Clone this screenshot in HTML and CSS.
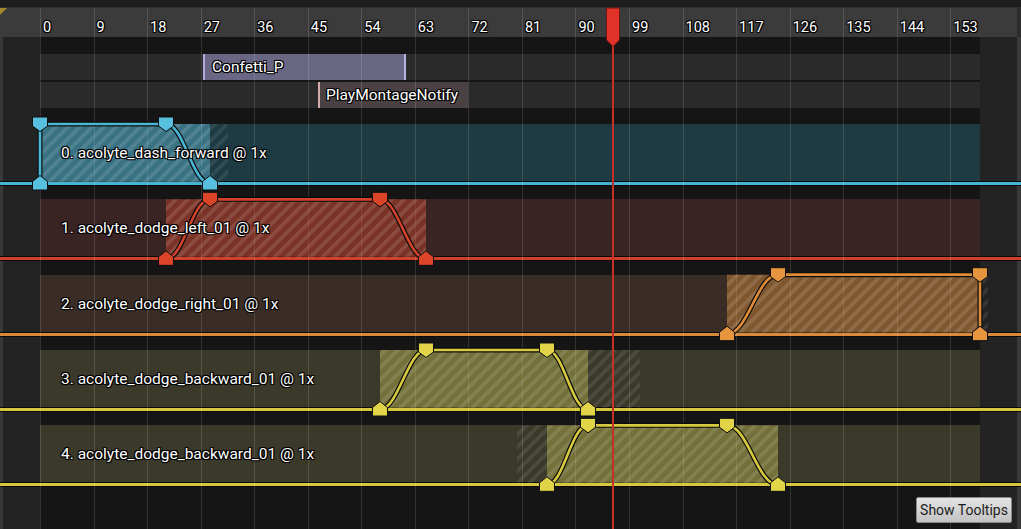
FILE: index.html
```html
<!DOCTYPE html>
<html>
<head>
<meta charset="utf-8">
<title>Montage Timeline</title>
<link rel="stylesheet" href="styles.css">
</head>
<body>
<div class="panel">
  <div class="topbar"></div>
  <div class="ruler">
    <div class="tick"><span>0</span></div>
    <div class="tick"><span>9</span></div>
    <div class="tick"><span>18</span></div>
    <div class="tick"><span>27</span></div>
    <div class="tick"><span>36</span></div>
    <div class="tick"><span>45</span></div>
    <div class="tick"><span>54</span></div>
    <div class="tick"><span>63</span></div>
    <div class="tick"><span>72</span></div>
    <div class="tick"><span>81</span></div>
    <div class="tick"><span>90</span></div>
    <div class="tick"><span>99</span></div>
    <div class="tick"><span>108</span></div>
    <div class="tick"><span>117</span></div>
    <div class="tick"><span>126</span></div>
    <div class="tick"><span>135</span></div>
    <div class="tick"><span>144</span></div>
    <div class="tick"><span>153</span></div>
  </div>

  <div class="gap-top"></div>
  <div class="notify-row">
    <div class="notify-item confetti">Confetti_P</div>
  </div>
  <div class="notify-sep"></div>
  <div class="notify-row">
    <div class="notify-item montage">PlayMontageNotify</div>
  </div>
  <div class="gap-mid"></div>

  <div class="track blue">
    <div class="band"><span class="track-label">0. acolyte_dash_forward @ 1x</span></div>
    <div class="track-line"></div>
    <div class="track-gap"></div>
  </div>
  <div class="track red">
    <div class="band"><span class="track-label">1. acolyte_dodge_left_01 @ 1x</span></div>
    <div class="track-line"></div>
    <div class="track-gap"></div>
  </div>
  <div class="track orange">
    <div class="band"><span class="track-label">2. acolyte_dodge_right_01 @ 1x</span></div>
    <div class="track-line"></div>
    <div class="track-gap"></div>
  </div>
  <div class="track yellow">
    <div class="band"><span class="track-label">3. acolyte_dodge_backward_01 @ 1x</span></div>
    <div class="track-line"></div>
    <div class="track-gap"></div>
  </div>
  <div class="track yellow">
    <div class="band"><span class="track-label">4. acolyte_dodge_backward_01 @ 1x</span></div>
    <div class="track-line"></div>
  </div>
  <div class="rest"></div>

  <div class="gridlines"></div>

  <svg class="canvas" width="1021" height="529" viewBox="0 0 1021 529" xmlns="http://www.w3.org/2000/svg">
    <defs>
      <pattern id="stripes" width="8.5" height="8.5" patternUnits="userSpaceOnUse" patternTransform="rotate(45)">
        <rect width="3.6" height="8.5" fill="rgba(255,255,255,0.12)"/>
      </pattern>
      <pattern id="faint" width="8.5" height="8.5" patternUnits="userSpaceOnUse" patternTransform="rotate(45)">
        <rect width="3.6" height="8.5" fill="rgba(255,255,255,0.09)"/>
      </pattern>
      <path id="kt" d="M-7.5,-7 H7.5 V2 L0,7.5 L-7.5,2 Z" stroke="#101010" stroke-width="1"/>
      <path id="kb" d="M-7.5,6.5 H7.5 V-2 L0,-8 L-7.5,-2 Z" stroke="#101010" stroke-width="1"/>
    </defs>

    <rect x="40" y="124" width="170" height="58" fill="rgba(90,185,210,0.45)"/>
    <rect x="40" y="124" width="170" height="58" fill="url(#stripes)"/>
    <rect x="210" y="124" width="18" height="58" fill="url(#faint)"/>

    <rect x="166" y="199.33" width="260" height="58" fill="rgba(205,72,45,0.45)"/>
    <rect x="166" y="199.33" width="260" height="58" fill="url(#stripes)"/>

    <rect x="727" y="274.67" width="253" height="58" fill="rgba(212,140,60,0.45)"/>
    <rect x="727" y="274.67" width="253" height="58" fill="url(#stripes)"/>
    <rect x="980" y="274.67" width="8" height="58" fill="url(#faint)"/>

    <rect x="380" y="350" width="208" height="58" fill="rgba(200,195,80,0.40)"/>
    <rect x="380" y="350" width="208" height="58" fill="url(#stripes)"/>
    <rect x="588" y="350" width="52" height="58" fill="url(#faint)"/>

    <rect x="547" y="425.33" width="231" height="58" fill="rgba(200,195,80,0.40)"/>
    <rect x="547" y="425.33" width="231" height="58" fill="url(#stripes)"/>
    <rect x="517" y="425.33" width="30" height="58" fill="url(#faint)"/>

    <g fill="none" stroke="#0c0c0c" stroke-width="5" stroke-linejoin="round">
      <path d="M40,183.5 V124 H166 C184,124 192,183.5 210,183.5"/>
      <path d="M166,258.83 C184,258.83 192,199.33 210,199.33 H380 C398,199.33 408,258.83 426,258.83"/>
      <path d="M727,334.17 C748,334.17 757,274.67 778,274.67 H980 V334.17"/>
      <path d="M380,409.5 C398,409.5 408,350 426,350 H547 C564,350 571,409.5 588,409.5"/>
      <path d="M547,484.83 C564,484.83 571,425.33 588,425.33 H727 C748,425.33 757,484.83 778,484.83"/>
    </g>
    <g fill="none" stroke-width="2.6" stroke-linejoin="round">
      <path stroke="#4ab6d6" d="M40,183.5 V124 H166 C184,124 192,183.5 210,183.5"/>
      <path stroke="#d2422a" d="M166,258.83 C184,258.83 192,199.33 210,199.33 H380 C398,199.33 408,258.83 426,258.83"/>
      <path stroke="#de8c36" d="M727,334.17 C748,334.17 757,274.67 778,274.67 H980 V334.17"/>
      <path stroke="#d8ca3e" d="M380,409.5 C398,409.5 408,350 426,350 H547 C564,350 571,409.5 588,409.5"/>
      <path stroke="#d8ca3e" d="M547,484.83 C564,484.83 571,425.33 588,425.33 H727 C748,425.33 757,484.83 778,484.83"/>
    </g>

    <g fill="#56c0de">
      <use href="#kt" x="40" y="124"/>
      <use href="#kt" x="166" y="124"/>
      <use href="#kb" x="40" y="183.5"/>
      <use href="#kb" x="210" y="183.5"/>
    </g>
    <g fill="#dc4428">
      <use href="#kb" x="166" y="258.83"/>
      <use href="#kt" x="210" y="199.33"/>
      <use href="#kt" x="380" y="199.33"/>
      <use href="#kb" x="426" y="258.83"/>
    </g>
    <g fill="#e6953e">
      <use href="#kb" x="727" y="334.17"/>
      <use href="#kt" x="778" y="274.67"/>
      <use href="#kt" x="980" y="274.67"/>
      <use href="#kb" x="980" y="334.17"/>
    </g>
    <g fill="#e2d449">
      <use href="#kb" x="380" y="409.5"/>
      <use href="#kt" x="426" y="350"/>
      <use href="#kt" x="547" y="350"/>
      <use href="#kb" x="588" y="409.5"/>
      <use href="#kb" x="547" y="484.83"/>
      <use href="#kt" x="588" y="425.33"/>
      <use href="#kt" x="727" y="425.33"/>
      <use href="#kb" x="778" y="484.83"/>
    </g>

    <rect x="612" y="40" width="2" height="489" fill="#c53027"/>
    <path d="M606.5,8 H619.5 V40 L613,46.5 L606.5,40 Z" fill="#e2332a" stroke="#6e1812" stroke-width="1"/>
  </svg>

  <button class="tooltips-btn">Show Tooltips</button>
</div>
</body>
</html>
```

FILE: styles.css
```css
* {
  box-sizing: border-box;
  margin: 0;
  padding: 0;
}

html, body {
  width: 1021px;
  height: 529px;
  overflow: hidden;
  background: #151515;
}

body {
  font-family: Roboto, "Liberation Sans", sans-serif;
}

.panel {
  position: relative;
  width: 1021px;
  height: 529px;
  overflow: hidden;
  display: flex;
  flex-direction: column;
  background: linear-gradient(to right,
    #393939 0 3px,
    #232323 3px 40px,
    #151515 40px 980px,
    #232323 980px 1017px,
    #393939 1017px);
}

.topbar {
  flex: none;
  height: 8px;
  background: #1d1d1d;
  border-bottom: 1px solid #2f2f2f;
}

.ruler {
  flex: none;
  position: relative;
  height: 29px;
  display: flex;
  padding-left: 40px;
  background: #3b3b3b;
  border-right: 4px solid #2c2c2c;
}

.ruler::before {
  content: "";
  position: absolute;
  left: 0;
  top: 0;
  border-style: solid;
  border-width: 7px 7px 0 0;
  border-color: #a6882c transparent transparent transparent;
}

.tick {
  flex: 0 0 53.55px;
  display: flex;
  align-items: flex-end;
  padding: 0 0 1px 2px;
  border-left: 1px solid #545454;
  font-size: 14.5px;
  line-height: 16px;
  color: #fff;
  text-shadow: 1px 1px 0 #000, -1px -1px 0 #000, 1px -1px 0 #000, -1px 1px 0 #000, 0 0 2px #000;
}

.gap-top {
  flex: none;
  height: 17px;
}

.notify-row {
  flex: none;
  height: 26px;
  margin: 0 41px 0 40px;
  display: flex;
  background: #2a2a2a;
}

.notify-sep {
  flex: none;
  height: 2px;
}

.gap-mid {
  flex: none;
  height: 16px;
}

.notify-item {
  display: flex;
  align-items: center;
  font-size: 15.5px;
  color: #fff;
  text-shadow: 1px 1px 0 #000, -1px -1px 0 #000, 1px -1px 0 #000, -1px 1px 0 #000, 0 0 2px #000;
  white-space: nowrap;
}

.confetti {
  margin-left: 163px;
  width: 203px;
  padding-left: 7px;
  background: #6a6784;
  border-left: 2px solid #b2aedb;
  border-right: 2px solid #b6b2de;
}

.montage {
  margin-left: 278px;
  width: 150px;
  padding-left: 6px;
  background: #4a4242;
  border-left: 2px solid #d6abab;
}

.track {
  flex: none;
}

.band {
  height: 58px;
  margin: 0 41px 0 40px;
  display: flex;
  align-items: center;
  padding-left: 21px;
}

.track-label {
  position: relative;
  z-index: 3;
  font-size: 15.5px;
  color: #fff;
  white-space: nowrap;
  text-shadow: 1px 1px 0 #000, -1px -1px 0 #000, 1px -1px 0 #000, -1px 1px 0 #000, 0 0 2px #000;
}

.track-line {
  height: 3px;
  box-shadow: 0 1px 0 #0b0b0b, 0 -1px 0 #0b0b0b;
}

.track-gap {
  height: 14.33px;
}

.blue .band { background: #1e3a43; }
.blue .track-line { background: #48b4d4; }

.red .band { background: #3a2323; }
.red .track-line { background: #cf4128; }

.orange .band { background: #392d25; }
.orange .track-line { background: #d9893a; }

.yellow .band { background: #3b392a; }
.yellow .track-line { background: #d6c83e; }

.rest {
  flex: 1;
}

.gridlines {
  position: absolute;
  left: 40px;
  top: 37px;
  width: 940px;
  bottom: 0;
  z-index: 1;
  pointer-events: none;
  background: repeating-linear-gradient(to right,
    rgba(255, 255, 255, 0.13) 0 1px,
    transparent 1px 53.55px);
}

.canvas {
  position: absolute;
  left: 0;
  top: 0;
  z-index: 2;
  pointer-events: none;
}

.tooltips-btn {
  position: absolute;
  right: 9px;
  bottom: 6px;
  z-index: 5;
  width: 96px;
  height: 26px;
  font-family: Roboto, "Liberation Sans", sans-serif;
  font-size: 14px;
  color: #1c1c1c;
  background: linear-gradient(#e4e4e4, #c2c2c2);
  border: 1px solid #8a8a8a;
  border-radius: 2px;
}
```
